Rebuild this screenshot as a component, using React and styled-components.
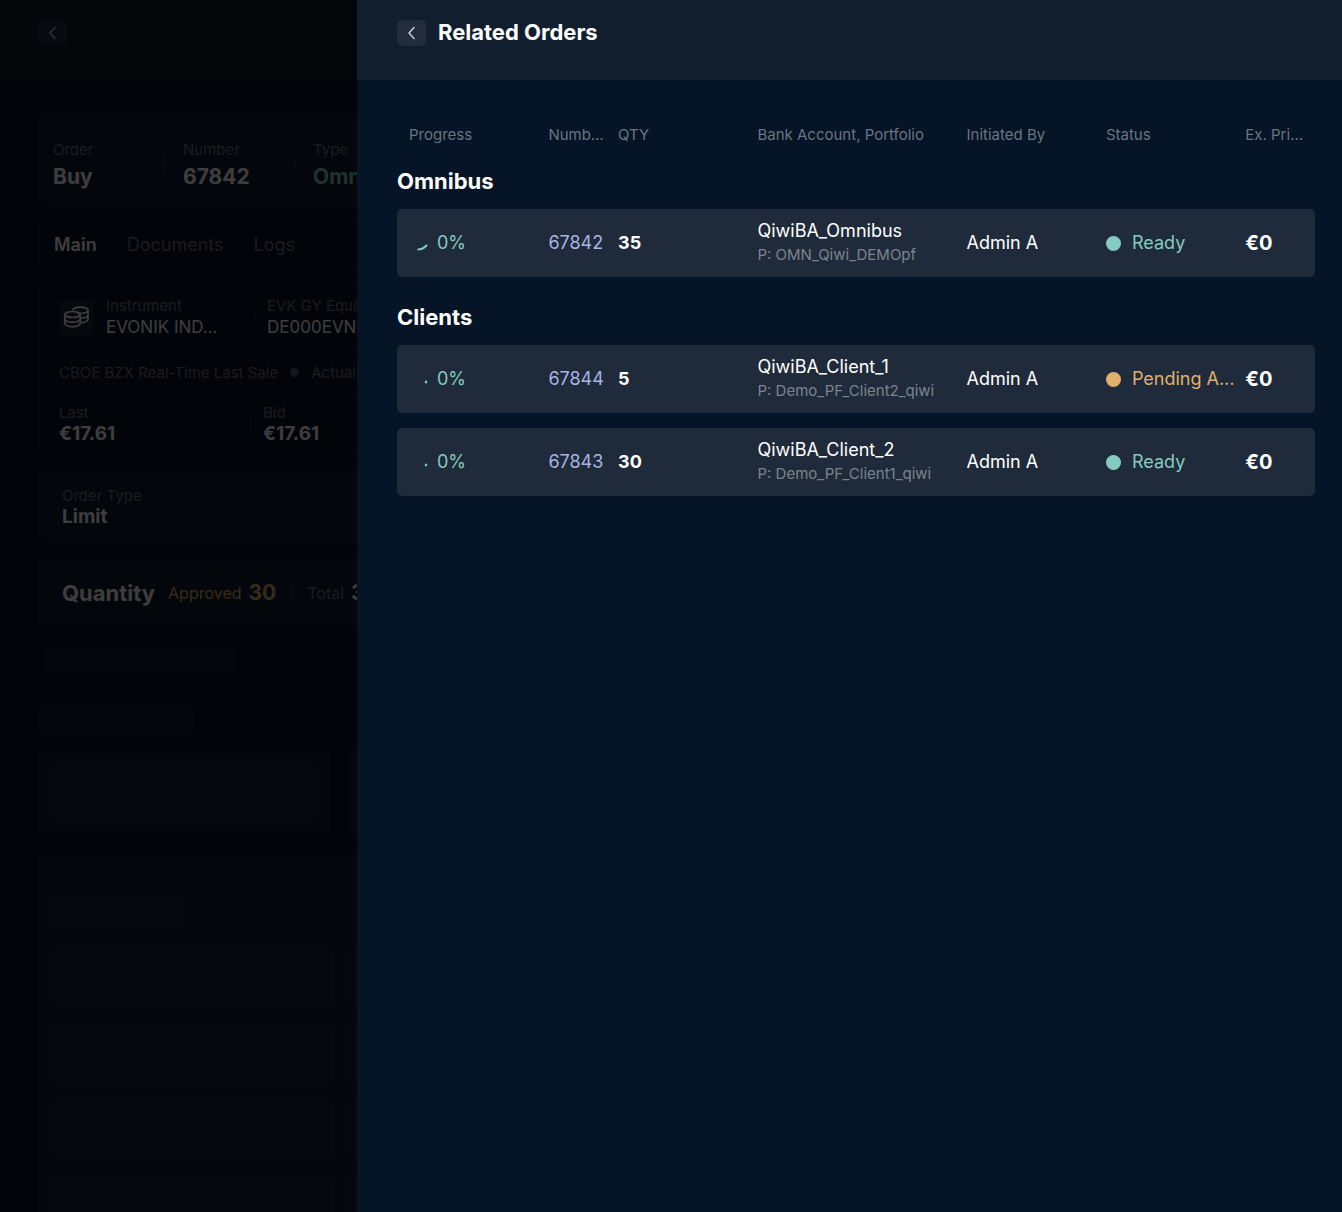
import React from "react";
import styled, { createGlobalStyle } from "styled-components";

const GlobalStyle = createGlobalStyle`
  *, *::before, *::after { box-sizing: border-box; }
  html, body { margin: 0; height: 100%; background: #051426; }
  body {
    overflow: hidden;
    color: #fff;
    font-family: Inter, "Liberation Sans", sans-serif;
    font-size: 18px;
    line-height: 24px;
  }
  #root { height: 100%; }
  h1, h2, p, dl, dd, dt { margin: 0; }
`;

const green = "#85cbbf";
const amber = "#e0b06c";
const muted = "#6b7481";

/* Order page, below the drawer */

const Page = styled.main`
  height: 100vh;
  overflow: hidden;
`;

const TopBar = styled.header`
  display: flex;
  align-items: flex-start;
  gap: 12px;
  height: 80px;
  padding: ${(p) => (p.$page ? "20px 38px" : "20px 40px")};
  background: #111e2d;
`;

const BackButton = styled.button`
  display: grid;
  place-items: center;
  width: 29px;
  height: 26px;
  padding: 0;
  border: 0;
  border-radius: 5px;
  background: rgba(255, 255, 255, 0.07);
  color: #c3c8ce;
  cursor: pointer;
`;

const Stack = styled.div`
  display: flex;
  flex-direction: column;
  gap: 15px;
  padding: 35px 27px 0 38px;
`;

const Card = styled.section`
  display: flex;
  align-items: center;
  height: ${(p) => p.$height}px;
  padding: ${(p) => p.$top || 0}px ${(p) => p.$pad}px 0;
  border-radius: 6px;
  background: rgba(255, 255, 255, 0.04);
`;

const Facts = styled.dl`
  display: flex;
`;

const Fact = styled.div`
  width: ${(p) => p.$width}px;
  flex: none;
  white-space: nowrap;
`;

const Term = styled.dt`
  font-size: 15px;
  line-height: ${(p) => (p.$large ? 26 : 20)}px;
  color: ${muted};
`;

const valueSizes = { large: 21, regular: 17, bold: 19 };

const Value = styled.dd`
  font-size: ${(p) => valueSizes[p.$kind || "bold"]}px;
  line-height: ${(p) => (p.$kind === "large" ? 28 : 22)}px;
  font-weight: ${(p) => (p.$kind === "regular" ? 400 : 700)};
  color: ${(p) => p.$color || "#fff"};
`;

const Divider = styled.span`
  flex: none;
  align-self: center;
  width: 1px;
  height: 16px;
  margin: 0 ${(p) => p.$after}px 0 0;
  background: rgba(255, 255, 255, 0.14);
`;

const Tabs = styled.nav`
  display: flex;
  align-items: center;
  gap: 30px;
  height: 45px;
  padding: 0 15px;
  border: 1px solid rgba(255, 255, 255, 0.07);
  border-radius: 8px;
`;

const Tab = styled.a`
  color: ${(p) => (p.$active ? "#fff" : muted)};
  font-weight: ${(p) => (p.$active ? 600 : 400)};
  text-decoration: none;
`;

const Instrument = styled.section`
  border: 1px solid rgba(255, 255, 255, 0.07);
  border-radius: 6px;
`;

const InstrumentRow = styled.div`
  display: flex;
  align-items: center;
  height: ${(p) => p.$height}px;
  padding: 0 20px;
  white-space: nowrap;

  & + & { border-top: 1px solid rgba(255, 255, 255, 0.07); }
`;

const IconTile = styled.span`
  display: grid;
  place-items: center;
  flex: none;
  width: 35px;
  height: 35px;
  margin-right: 12px;
  border-radius: 5px;
  background: rgba(255, 255, 255, 0.08);
`;

const Feed = styled.p`
  display: flex;
  align-items: center;
  gap: 12px;
  font-size: 15px;
  color: ${muted};
`;

const FeedDot = styled.span`
  width: 9px;
  height: 9px;
  border-radius: 50%;
  background: #545b66;
`;

const QuantityTitle = styled.h2`
  margin-right: 13px;
  font-size: 22px;
  font-weight: 700;
`;

const QuantityLabel = styled.span`
  margin-right: 7px;
  font-size: 16px;
  color: ${(p) => p.$color || muted};
`;

const QuantityValue = styled.strong`
  margin-right: 15px;
  font-size: 21px;
  color: ${(p) => p.$color || "#fff"};
`;

const Skeleton = styled.div`
  flex: none;
  width: ${(p) => (p.$width ? p.$width + "px" : "auto")};
  height: ${(p) => p.$height}px;
  border-radius: 5px;
  background: ${(p) => (p.$outline ? "transparent" : "rgba(255, 255, 255, 0.035)")};
  border: ${(p) => (p.$outline ? "1px solid rgba(255, 255, 255, 0.04)" : "0")};
`;

const SkeletonBar = styled.div`
  height: 36px;
  padding: 3px;
  border: 1px solid rgba(255, 255, 255, 0.03);
  border-radius: 7px;
`;

const SkeletonTitle = styled.div`
  padding: 13px 0 0;
`;

const SkeletonCards = styled.div`
  display: grid;
  grid-template-columns: repeat(4, 292px);
  gap: 16px;
`;

const SkeletonPanel = styled.div`
  padding: ${(p) => (p.$tall ? "41px 14px 14px" : "14px")};
  border-radius: 6px;
  background: rgba(255, 255, 255, 0.035);
`;

const SkeletonTabs = styled.div`
  display: flex;
  gap: 14px;
  margin-bottom: 16px;
`;

const SkeletonGrid = styled.div`
  display: grid;
  grid-template-columns: repeat(4, 281px);
  gap: 15px;
`;

const Backdrop = styled.div`
  position: fixed;
  inset: 0;
  background: rgba(0, 0, 0, 0.76);
`;

/* Drawer */

const Drawer = styled.aside`
  position: fixed;
  inset: 0 0 0 357px;
  background: #051426;
`;

const DrawerTitle = styled.h1`
  font-size: 22px;
  line-height: 24px;
  font-weight: 700;
`;

const DrawerBody = styled.div`
  padding: 43px 27px 40px 40px;
`;

const Table = styled.table`
  display: block;
  width: 100%;
`;

const Head = styled.thead`
  display: block;
`;

const Group = styled.tbody`
  display: grid;
  gap: 15px;
  padding-top: 21px;

  & + & { padding-top: 27px; }
`;

const Columns = styled.tr`
  display: grid;
  grid-template-columns: repeat(13, minmax(0, 1fr));
  column-gap: 16px;
  align-items: center;
  padding: 0 16px 0 12px;
`;

const OrderRow = styled(Columns)`
  height: 68px;
  border-radius: 5px;
  background: #1f2b3a;
`;

const GroupRow = styled.tr`
  display: block;
`;

const GroupTitle = styled.th`
  display: block;
  padding: 0;
  text-align: left;
  font-size: 22px;
  line-height: 26px;
  font-weight: 700;
`;

const HeadCell = styled.th`
  grid-column: span ${(p) => p.$span};
  padding: 0;
  text-align: left;
  white-space: nowrap;
  font-size: 15px;
  font-weight: 400;
  color: ${muted};
`;

const Cell = styled.td`
  grid-column: span ${(p) => p.$span};
  padding: 0;
  white-space: nowrap;
  font-weight: ${(p) => (p.$bold ? 700 : 400)};
`;

const PriceCell = styled(Cell)`
  font-size: 20px;
  font-weight: 700;
`;

const Progress = styled.span`
  display: flex;
  align-items: center;
  gap: 8px;
  color: ${green};
`;

const OrderLink = styled.a`
  color: #a9b4e2;
  text-decoration: none;
`;

const Portfolio = styled.span`
  display: block;
  font-size: 15px;
  color: #7b838e;
`;

const Status = styled.span`
  display: flex;
  align-items: center;
  gap: 11px;
  color: ${(p) => p.$color};

  &::before {
    content: "";
    flex: none;
    width: 15px;
    height: 15px;
    border-radius: 50%;
    background: currentColor;
  }
`;

const Chevron = () => (
  <svg width="8" height="14" viewBox="0 0 8 14" fill="none" stroke="currentColor" strokeWidth="1.6" strokeLinecap="round" strokeLinejoin="round" aria-hidden="true">
    <path d="M6 1.500 1 7l5 5.500" />
  </svg>
);

const Coins = () => (
  <svg width="25" height="22" viewBox="0 0 25 22" fill="none" stroke="#fff" strokeWidth="1.7" aria-hidden="true">
    <ellipse cx="8.5" cy="8.5" rx="7.6" ry="3" />
    <path d="M.9 8.5v9c0 1.800 3.400 3.300 7.600 3.300s7.600-1.500 7.600-3.300v-9M.9 13c0 1.800 3.400 3.200 7.600 3.200s7.600-1.400 7.600-3.200" />
    <path d="M8.800 4.400c.2-1.900 3.500-3.300 7.600-3.300 4.200 0 7.600 1.400 7.600 3.100s-3.400 3.200-7.600 3.200c-1.200 0-2.300-.1-3.300-.3" />
    <path d="M24 4.500v9c0 1.700-3.300 3.100-7.400 3.100M24 9c0 1.700-3.300 3.100-7.400 3.100" />
  </svg>
);

const Arc = ({ path }) => (
  <svg width="20" height="20" viewBox="0 0 20 20" fill="none" stroke={green} strokeWidth="2" aria-hidden="true">
    <path d={path} />
  </svg>
);

const headers = [
  ["Progress", 2],
  ["Numb…", 1],
  ["QTY", 2],
  ["Bank Account, Portfolio", 3],
  ["Initiated By", 2],
  ["Status", 2],
  ["Ex. Pri…", 1],
];

const longArc = "M8.500 16.500Q14 16.500 18 12";
const shortArc = "M16.400 14.200 17.600 11.800";

const groups = [
  {
    title: "Omnibus",
    orders: [
      { number: "67842", qty: 35, account: "QiwiBA_Omnibus", portfolio: "OMN_Qiwi_DEMOpf", status: "Ready", arc: longArc },
    ],
  },
  {
    title: "Clients",
    orders: [
      { number: "67844", qty: 5, account: "QiwiBA_Client_1", portfolio: "Demo_PF_Client2_qiwi", status: "Pending A…", pending: true, arc: shortArc },
      { number: "67843", qty: 30, account: "QiwiBA_Client_2", portfolio: "Demo_PF_Client1_qiwi", status: "Ready", arc: shortArc },
    ],
  },
];

function OrderPage() {
  return (
    <Page>
      <TopBar $page>
        <BackButton aria-label="Back"><Chevron /></BackButton>
      </TopBar>
      <Stack>
        <Card $height={92} $pad={15} $top={6}>
          <Facts>
            <Fact $width={111}><Term $large>Order</Term><Value $kind="large">Buy</Value></Fact>
            <Divider $after={18} />
            <Fact $width={111}><Term $large>Number</Term><Value $kind="large">67842</Value></Fact>
            <Divider $after={18} />
            <Fact $width={111}><Term $large>Type</Term><Value $kind="large" $color={green}>Omnibus</Value></Fact>
          </Facts>
        </Card>
        <Tabs>
          <Tab href="#main" $active>Main</Tab>
          <Tab href="#documents">Documents</Tab>
          <Tab href="#logs">Logs</Tab>
        </Tabs>
        <Instrument>
          <InstrumentRow $height={68}>
            <IconTile><Coins /></IconTile>
            <Facts>
              <Fact $width={148}><Term>Instrument</Term><Value $kind="regular">EVONIK IND…</Value></Fact>
              <Divider $after={12} />
              <Fact $width={148}><Term>EVK GY Equity</Term><Value $kind="regular">DE000EVNK013</Value></Fact>
            </Facts>
          </InstrumentRow>
          <InstrumentRow $height={42}>
            <Feed>CBOE BZX Real-Time Last Sale <FeedDot /> Actual</Feed>
          </InstrumentRow>
          <InstrumentRow $height={61}>
            <Facts>
              <Fact $width={191}><Term>Last</Term><Value>€17.61</Value></Fact>
              <Divider $after={12} />
              <Fact $width={191}><Term>Bid</Term><Value>€17.61</Value></Fact>
            </Facts>
          </InstrumentRow>
        </Instrument>
        <Card $height={73} $pad={24}>
          <Facts>
            <Fact $width={192}><Term>Order Type</Term><Value>Limit</Value></Fact>
          </Facts>
        </Card>
        <Card $height={70} $pad={24}>
          <QuantityTitle>Quantity</QuantityTitle>
          <QuantityLabel $color={amber}>Approved</QuantityLabel>
          <QuantityValue $color={amber}>30</QuantityValue>
          <Divider $after={15} />
          <QuantityLabel>Total</QuantityLabel>
          <QuantityValue>30</QuantityValue>
        </Card>
        <SkeletonBar><Skeleton $width={197} $height={28} /></SkeletonBar>
        <SkeletonTitle><Skeleton $width={155} $height={26} /></SkeletonTitle>
        <SkeletonCards>
          {[0, 1, 2, 3].map((i) => (
            <SkeletonPanel key={i}><Skeleton $height={62} /></SkeletonPanel>
          ))}
        </SkeletonCards>
        <SkeletonPanel $tall>
          <SkeletonTabs>
            <Skeleton $width={133} $height={37} />
            <Skeleton $width={134} $height={37} $outline />
          </SkeletonTabs>
          <SkeletonGrid>
            {Array.from({ length: 16 }, (_, i) => (
              <Skeleton key={i} $height={61} />
            ))}
          </SkeletonGrid>
        </SkeletonPanel>
      </Stack>
    </Page>
  );
}

function Order({ order }) {
  return (
    <OrderRow>
      <Cell $span={2}><Progress><Arc path={order.arc} />0%</Progress></Cell>
      <Cell $span={1}><OrderLink href={"#" + order.number}>{order.number}</OrderLink></Cell>
      <Cell $span={2} $bold>{order.qty}</Cell>
      <Cell $span={3}>{order.account}<Portfolio>P: {order.portfolio}</Portfolio></Cell>
      <Cell $span={2}>Admin A</Cell>
      <Cell $span={2}>
        <Status $color={order.pending ? amber : green}>{order.status}</Status>
      </Cell>
      <PriceCell $span={1}>€0</PriceCell>
    </OrderRow>
  );
}

export default function App() {
  return (
    <>
      <GlobalStyle />
      <OrderPage />
      <Backdrop />
      <Drawer aria-label="Related Orders">
        <TopBar>
          <BackButton aria-label="Close related orders"><Chevron /></BackButton>
          <DrawerTitle>Related Orders</DrawerTitle>
        </TopBar>
        <DrawerBody>
          <Table>
            <Head>
              <Columns>
                {headers.map(([label, span]) => (
                  <HeadCell key={label} $span={span} scope="col">{label}</HeadCell>
                ))}
              </Columns>
            </Head>
            {groups.map((group) => (
              <Group key={group.title}>
                <GroupRow><GroupTitle scope="rowgroup">{group.title}</GroupTitle></GroupRow>
                {group.orders.map((order) => <Order key={order.number} order={order} />)}
              </Group>
            ))}
          </Table>
        </DrawerBody>
      </Drawer>
    </>
  );
}
